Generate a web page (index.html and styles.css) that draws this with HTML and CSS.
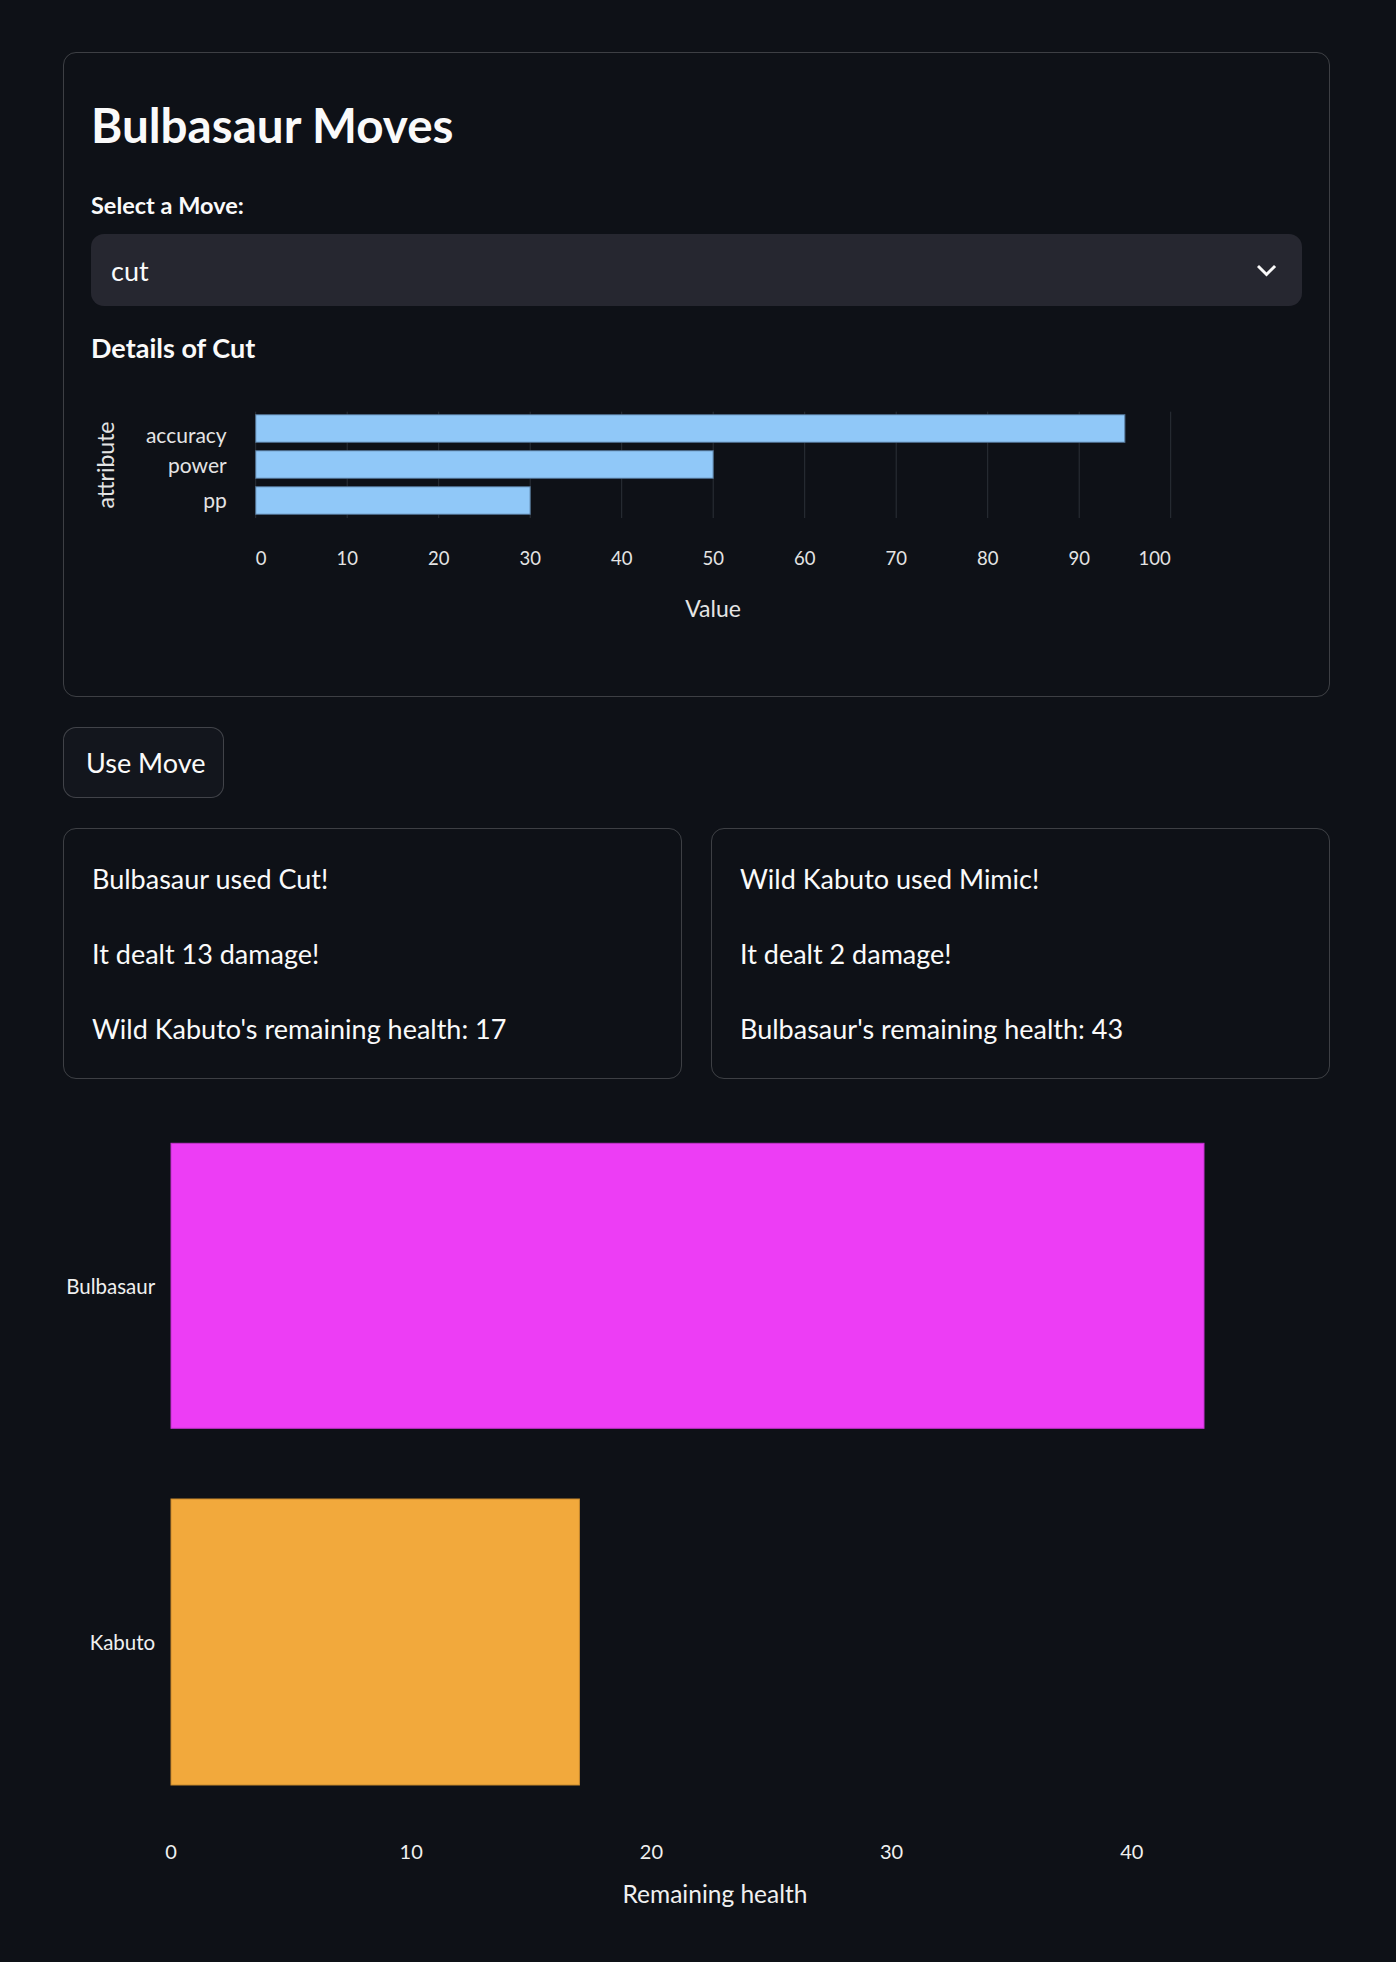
FILE: index.html
```html
<!DOCTYPE html>
<html lang="en">
<head>
<meta charset="utf-8">
<title>Bulbasaur Moves</title>
<link rel="stylesheet" href="styles.css">
</head>
<body>
<main class="main">
  <section class="panel">
    <h1 class="title">Bulbasaur Moves</h1>
    <div class="field-label">Select a Move:</div>
    <div class="select">
      <span class="select-value">cut</span>
      <svg class="chevron" width="20" height="14" viewBox="0 0 20 14"><polyline points="2,3 9.5,10.5 17,3" fill="none" stroke="#fafafa" stroke-width="3" stroke-linecap="square"/></svg>
    </div>
    <h3 class="subheading">Details of Cut</h3>
    <svg class="chart-moves" width="1211" height="304" viewBox="0 0 1211 304">
      <g class="grid" stroke="#2c3038" stroke-width="1">
        <line x1="164.7" y1="47.7" x2="164.7" y2="154"/>
        <line x1="256.2" y1="47.7" x2="256.2" y2="154"/>
        <line x1="347.7" y1="47.7" x2="347.7" y2="154"/>
        <line x1="439.2" y1="47.7" x2="439.2" y2="154"/>
        <line x1="530.7" y1="47.7" x2="530.7" y2="154"/>
        <line x1="622.2" y1="47.7" x2="622.2" y2="154"/>
        <line x1="713.7" y1="47.7" x2="713.7" y2="154"/>
        <line x1="805.2" y1="47.7" x2="805.2" y2="154"/>
        <line x1="896.7" y1="47.7" x2="896.7" y2="154"/>
        <line x1="988.2" y1="47.7" x2="988.2" y2="154"/>
        <line x1="1079.7" y1="47.7" x2="1079.7" y2="154"/>
      </g>
      <g fill="#90c8f8" stroke="#4f6f8f" stroke-width="1">
        <rect x="164.7" y="50.7" width="869.2" height="27.6"/>
        <rect x="164.7" y="86.7" width="457.5" height="27.6"/>
        <rect x="164.7" y="122.7" width="274.5" height="27.6"/>
      </g>
      <g class="axis-label" text-anchor="end">
        <text x="135.7" y="79.3">accuracy</text>
        <text x="135.7" y="108.7">power</text>
        <text x="135.7" y="144.3">pp</text>
      </g>
      <text class="axis-title" x="23" y="101" text-anchor="middle" transform="rotate(-90 23 101)">attribute</text>
      <g class="tick-label" text-anchor="middle">
        <text x="164.7" y="201" text-anchor="start">0</text>
        <text x="256.2" y="201">10</text>
        <text x="347.7" y="201">20</text>
        <text x="439.2" y="201">30</text>
        <text x="530.7" y="201">40</text>
        <text x="622.2" y="201">50</text>
        <text x="713.7" y="201">60</text>
        <text x="805.2" y="201">70</text>
        <text x="896.7" y="201">80</text>
        <text x="988.2" y="201">90</text>
        <text x="1079.7" y="201" text-anchor="end">100</text>
      </g>
      <text class="axis-title" x="622" y="252.7" text-anchor="middle">Value</text>
    </svg>
  </section>

  <button class="action-button" type="button">Use Move</button>

  <div class="results">
    <div class="result-card">
      <p>Bulbasaur used Cut!</p>
      <p>It dealt 13 damage!</p>
      <p>Wild Kabuto's remaining health: 17</p>
    </div>
    <div class="result-card">
      <p>Wild Kabuto used Mimic!</p>
      <p>It dealt 2 damage!</p>
      <p>Bulbasaur's remaining health: 43</p>
    </div>
  </div>

  <svg class="chart-health" width="1267" height="840" viewBox="0 0 1267 840">
    <g class="health-label" text-anchor="end">
      <text x="92.2" y="189">Bulbasaur</text>
      <text x="92.2" y="545">Kabuto</text>
    </g>
    <rect x="108" y="38.3" width="1033" height="285" fill="#ed3df5" stroke="#c232cc" stroke-width="1"/>
    <rect x="108" y="394" width="408.4" height="286" fill="#f2a93c" stroke="#c98a2d" stroke-width="1"/>
    <g class="health-tick" text-anchor="middle">
      <text x="108" y="754.3">0</text>
      <text x="348.2" y="754.3">10</text>
      <text x="588.4" y="754.3">20</text>
      <text x="828.6" y="754.3">30</text>
      <text x="1068.8" y="754.3">40</text>
    </g>
    <text class="health-title" x="652" y="798.3" text-anchor="middle">Remaining health</text>
  </svg>
</main>
</body>
</html>
```
FILE: styles.css
```css
html, body {
  margin: 0;
  padding: 0;
  background: #0e1117;
}

body {
  font-family: "Lato", "Open Sans", "Liberation Sans", sans-serif;
  color: #fafafa;
}

.main {
  width: 1267px;
  margin-left: 63px;
  padding-top: 52px;
  display: flex;
  flex-direction: column;
  align-items: flex-start;
}

.panel {
  box-sizing: border-box;
  width: 1267px;
  border: 1px solid rgba(250, 250, 250, 0.2);
  border-radius: 13px;
  padding: 27px 27px 28px 27px;
  display: flex;
  flex-direction: column;
}

.title {
  margin: 17px 0 0 0;
  font-size: 47.6px;
  line-height: 56px;
  font-weight: 700;
  color: #fafafa;
}

.field-label {
  margin-top: 38px;
  font-size: 23.5px;
  line-height: 28px;
  font-weight: 700;
}

.select {
  margin-top: 15px;
  height: 72px;
  box-sizing: border-box;
  background: #262730;
  border-radius: 13px;
  display: flex;
  align-items: center;
  justify-content: space-between;
  padding: 0 25px 0 20px;
}

.select-value {
  font-size: 27px;
  line-height: normal;
}

.chevron {
  display: block;
  margin-top: 2px;
}

.subheading {
  margin: 26px 0 0 0;
  font-size: 27px;
  line-height: 32px;
  font-weight: 700;
}

.chart-moves {
  display: block;
}

.axis-label text {
  font-family: "Lato", sans-serif;
  font-size: 21px;
  fill: #e4e4e4;
}

.axis-title {
  font-family: "Lato", sans-serif;
  font-size: 23px;
  fill: #e4e4e4;
}

.tick-label text {
  font-family: "Lato", sans-serif;
  font-size: 18.5px;
  fill: #e4e4e4;
}

.action-button {
  margin-top: 30px;
  height: 71px;
  box-sizing: border-box;
  padding: 0 18px 0 22px;
  background: #13161d;
  color: #fafafa;
  border: 1px solid rgba(250, 250, 250, 0.2);
  border-radius: 13px;
  font-family: "Lato", sans-serif;
  font-size: 27px;
  line-height: normal;
}

.results {
  margin-top: 30px;
  width: 1267px;
  display: grid;
  grid-template-columns: 1fr 1fr;
  gap: 29px;
}

.result-card {
  box-sizing: border-box;
  height: 251px;
  border: 1px solid rgba(250, 250, 250, 0.2);
  border-radius: 13px;
  padding: 28px 28px 28px 28px;
}

.result-card p {
  margin: 0 0 32px 0;
  font-size: 27px;
  line-height: 43px;
}

.result-card p:last-child {
  margin-bottom: 0;
}

.chart-health {
  display: block;
  margin-top: 26px;
}

.health-label text {
  font-family: "Lato", sans-serif;
  font-size: 20.5px;
  fill: #f0f0f0;
}

.health-tick text {
  font-family: "Lato", sans-serif;
  font-size: 20px;
  fill: #f0f0f0;
}

.health-title {
  font-family: "Lato", sans-serif;
  font-size: 24.5px;
  fill: #f0f0f0;
}
```
